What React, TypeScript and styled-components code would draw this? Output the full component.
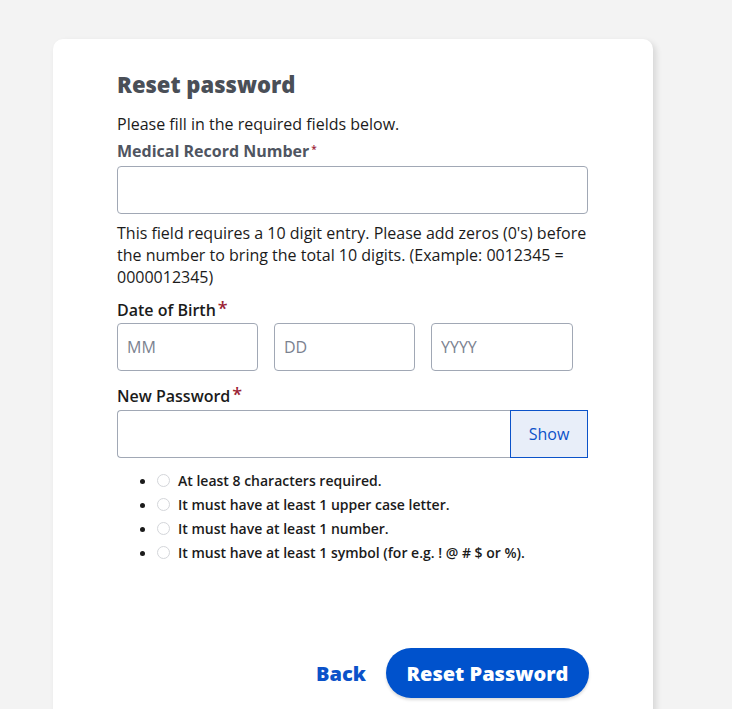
import React from "react";
import styled, { createGlobalStyle } from "styled-components";

const Global = createGlobalStyle`
  html, body { margin: 0; padding: 0; background: #f3f3f3; }
  body { font-family: "Open Sans", "Noto Sans", sans-serif; color: #1b1b1b; overflow: hidden; }
  * { box-sizing: border-box; }
`;

const Page = styled.div`
  padding: 39px 0 0 53px;
  height: 709px;
`;

const Card = styled.div`
  width: 600px;
  min-height: 720px;
  background: #fff;
  border-radius: 10px;
  box-shadow: 3px 3px 6px rgba(0, 0, 0, 0.12);
  padding: 30px 65px 0 64px;
  display: flex;
  flex-direction: column;
`;

const Title = styled.h1`
  margin: 0;
  font-size: 22px;
  line-height: 30px;
  font-weight: 800;
  color: #4a4f57;
`;

const Intro = styled.p`
  margin: 14px 0 0;
  font-size: 16px;
  line-height: 22px;
`;

const Label = styled.label<{ $muted?: boolean; $mt: number }>`
  display: block;
  margin-top: ${(p) => p.$mt}px;
  font-size: 16px;
  line-height: 22px;
  font-weight: ${(p) => (p.$muted ? 700 : 600)};
  color: ${(p) => (p.$muted ? "#4f5561" : "#1b1b1b")};
`;

const Star = styled.span<{ $small?: boolean }>`
  color: #9b2335;
  font-size: ${(p) => (p.$small ? "10px" : "18px")};
  margin-left: 2px;
  vertical-align: ${(p) => (p.$small ? "4px" : "1px")};
  font-weight: 600;
`;

const Input = styled.input<{ $mt: number }>`
  display: block;
  width: 100%;
  height: 48px;
  margin-top: ${(p) => p.$mt}px;
  border: 1px solid #a1a8b5;
  border-radius: 4px;
  padding: 0 9px;
  font-family: inherit;
  font-size: 16px;
  color: #1b1b1b;
  &::placeholder { color: #7b8290; }
`;

const Help = styled.p`
  margin: 8px 0 0;
  font-size: 16px;
  line-height: 22px;
`;

const DateRow = styled.div`
  display: flex;
  gap: 16px;
  margin-top: 2px;
`;

const DateInput = styled(Input)<{ $w: number }>`
  width: ${(p) => p.$w}px;
  margin-top: 0;
`;

const PwRow = styled.div`
  display: flex;
  margin-top: 3px;
  height: 48px;
`;

const PwInput = styled.input`
  flex: 1;
  height: 48px;
  border: 1px solid #a1a8b5;
  border-right: none;
  border-radius: 4px 0 0 4px;
  padding: 0 9px;
  font-family: inherit;
  font-size: 16px;
`;

const ShowBtn = styled.button`
  width: 78px;
  height: 48px;
  background: #e8eef9;
  border: 1px solid #0b52c9;
  color: #0b52c9;
  font-family: inherit;
  font-size: 16px;
  padding: 0;
`;

const Rules = styled.ul`
  margin: 10px 0 0;
  padding-left: 40px;
  list-style: disc;
`;

const Rule = styled.li`
  font-size: 14px;
  line-height: 24px;
  height: 24px;
  font-weight: 600;
  &::marker { font-size: 15px; }
`;

const Radio = styled.span`
  width: 13px;
  height: 13px;
  border-radius: 50%;
  border: 1px solid #d4d6da;
  display: inline-block;
  vertical-align: -1px;
  margin-right: 8px;
`;

const Actions = styled.div`
  display: flex;
  justify-content: flex-end;
  align-items: center;
  gap: 20px;
  margin-top: 84px;
  margin-right: -1px;
`;

const BackLink = styled.a`
  color: #0b52c9;
  font-size: 20px;
  font-weight: 800;
  text-decoration: none;
`;

const Primary = styled.button`
  width: 203px;
  height: 50px;
  border-radius: 25px;
  border: none;
  background: #0052cc;
  color: #fff;
  font-family: inherit;
  font-size: 20px;
  font-weight: 800;
  box-shadow: 0 2px 3px rgba(0, 0, 0, 0.15);
`;

const rules = [
  "At least 8 characters required.",
  "It must have at least 1 upper case letter.",
  "It must have at least 1 number.",
  "It must have at least 1 symbol (for e.g. ! @ # $ or %).",
];

export default function App() {
  return (
    <>
      <Global />
      <Page>
        <Card>
          <Title>Reset password</Title>
          <Intro>Please fill in the required fields below.</Intro>
          <Label $muted $mt={3}>
            Medical Record Number<Star $small>*</Star>
          </Label>
          <Input $mt={4} />
          <Help>
            This field requires a 10 digit entry. Please add zeros (0's) before the number to bring the
            total 10 digits. (Example: 0012345 = 0000012345)
          </Help>
          <Label $mt={9}>
            Date of Birth<Star>*</Star>
          </Label>
          <DateRow>
            <DateInput $mt={0} $w={141} placeholder="MM" />
            <DateInput $mt={0} $w={141} placeholder="DD" />
            <DateInput $mt={0} $w={142} placeholder="YYYY" />
          </DateRow>
          <Label $mt={12}>
            New Password<Star>*</Star>
          </Label>
          <PwRow>
            <PwInput type="password" />
            <ShowBtn>Show</ShowBtn>
          </PwRow>
          <Rules>
            {rules.map((r) => (
              <Rule key={r}>
                <Radio />
                {r}
              </Rule>
            ))}
          </Rules>
          <Actions>
            <BackLink href="#">Back</BackLink>
            <Primary>Reset Password</Primary>
          </Actions>
        </Card>
      </Page>
    </>
  );
}
